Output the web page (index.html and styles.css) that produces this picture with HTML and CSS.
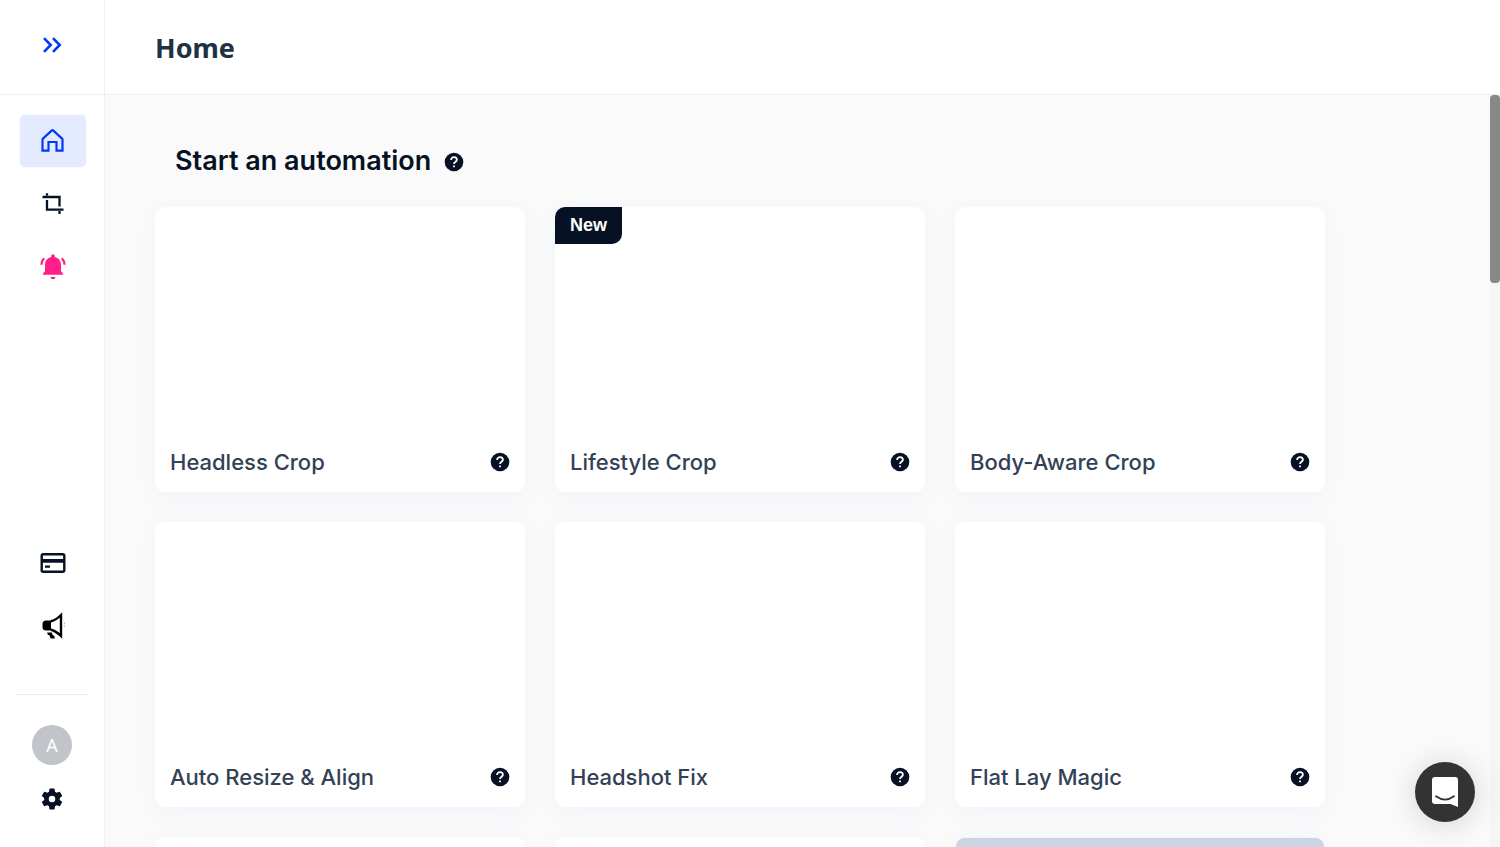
FILE: index.html
```html
<!DOCTYPE html>
<html lang="en">
<head>
<meta charset="utf-8">
<title>Home</title>
<link rel="stylesheet" href="styles.css">
</head>
<body>
<svg class="symbols" aria-hidden="true">
  <symbol id="help" viewBox="0 0 20 20">
    <circle cx="10" cy="10" r="9.300" fill="#061224"/>
    <path d="M7.100 8c0-1.900 1.300-2.900 2.900-2.900s2.900 1.100 2.900 2.600c0 2-2.900 2.100-2.900 4.300" fill="none" stroke="#fff" stroke-width="1.800"/>
    <path d="M9.100 13.400h1.800v1.800H9.100z" fill="#fff"/>
  </symbol>
</svg>
<div class="app">
  <aside class="sidebar">
    <button class="expand" aria-label="Expand menu">
      <svg width="20" height="18" viewBox="0 0 20 18" fill="none" stroke="#0038ff" stroke-width="2.600"><path d="M2 2.200 8.700 9 2 15.800M11 2.200 17.700 9 11 15.800"/></svg>
    </button>
    <nav class="nav">
      <a class="item active" href="#home" aria-label="Home">
        <svg width="24" height="24" viewBox="0 0 24 24" fill="none" stroke="#0038ff" stroke-width="2.200"><path d="M1.500 21.700V10.500Q1.500 10 1.900 9.600L10.900 1.400Q11.500.9 12.100 1.400L21.100 9.600Q21.500 10 21.500 10.500V21.700H15.500V13H7.500V21.700Z"/></svg>
      </a>
      <a class="item" href="#crop" aria-label="Crop">
        <svg width="24" height="24" viewBox="0 0 24 24" fill="none" stroke="#061224" stroke-width="2.300"><path d="M1.500 5H18.500V14.500M6 1.200V3.600M6 8V17.700H22.500M18.500 19V22"/></svg>
      </a>
      <a class="item" href="#alerts" aria-label="Notifications">
        <svg width="26" height="26" viewBox="0 0 26 26"><path d="M3 20.800v-1.400l2-2.200V11c0-4 2.500-7.200 6.200-7.900V2a1.800 1.800 0 0 1 3.600 0v1.100C18.500 3.800 21 7 21 11v6.200l2 2.200v1.400z" fill="#ff1f87"/><path d="M10.500 23h5a2.500 2.200 0 0 1-5 0z" fill="#ff1f87"/><path d="M1.500 10.800q.1-4 2.600-6.500M24.500 10.800q-.1-4-2.600-6.500" fill="none" stroke="#ff1f87" stroke-width="2.300"/></svg>
      </a>
    </nav>
    <nav class="nav lower">
      <a class="item" href="#billing" aria-label="Billing">
        <svg width="26" height="22" viewBox="0 0 26 22"><rect x="1.700" y="2.200" width="22.600" height="17.600" rx="1.500" fill="none" stroke="#061224" stroke-width="2.400"/><path d="M1 7h24v3.800H1zM5 13.500h5v2.200H5z" fill="#061224"/></svg>
      </a>
      <a class="item" href="#news" aria-label="Announcements">
        <svg width="26" height="28" viewBox="0 0 26 28"><path d="M11 8.500H6Q2.500 8.500 2.500 12v3q0 3.500 3.500 3.500h5z" fill="#000"/><path d="M11 9.300Q15.500 8.400 21 3V24Q15.500 18.600 11 17.700" fill="none" stroke="#000" stroke-width="2.400"/><path d="M7 20.500h4.800l1 3h1.400l.6 3h-4l-1.600-3.600H8z" fill="#000"/><path d="M24.500 10.500v1.500M24.500 13.200v1.400" stroke="#bbb"/></svg>
      </a>
    </nav>
    <div class="account">
      <button class="avatar" aria-label="Account">A</button>
      <a href="#settings" aria-label="Settings">
        <svg width="26" height="26" viewBox="0 0 24 24"><path fill="#061224" fill-rule="evenodd" d="M19.140 12.940c.04-.3.060-.61.060-.94s-.02-.64-.07-.94l2.030-1.580a.49.49 0 0 0 .12-.61l-1.920-3.320a.49.49 0 0 0-.59-.22l-2.390.96a7 7 0 0 0-1.620-.94L14.400 2.810a.48.48 0 0 0-.48-.41h-3.840a.47.47 0 0 0-.47.410L9.250 5.350c-.59.24-1.130.57-1.620.94l-2.390-.96a.48.48 0 0 0-.59.22L2.740 8.870a.47.47 0 0 0 .12.610l2.030 1.580c-.05.3-.09.63-.09.94s.02.640.07.940l-2.030 1.580a.49.49 0 0 0-.12.610l1.920 3.320c.12.220.370.290.590.220l2.390-.96c.5.380 1.030.7 1.620.94l.36 2.540c.05.240.240.410.480.410h3.840c.240 0 .440-.170.470-.410l.360-2.540a7 7 0 0 0 1.620-.94l2.390.96c.220.080.470 0 .590-.220l1.920-3.320a.47.47 0 0 0-.12-.610zM12 15a3 3 0 1 1 0-6 3 3 0 0 1 0 6z"/></svg>
      </a>
    </div>
  </aside>
  <div class="page">
    <header class="topbar"><h1>Home</h1></header>
    <div class="body">
      <main class="content">
        <div class="heading"><h2>Start an automation</h2><button class="help" aria-label="About automations"><svg><use href="#help"/></svg></button></div>
        <div class="cards">
          <article class="card"><h3>Headless Crop</h3><button class="help" aria-label="About Headless Crop"><svg><use href="#help"/></svg></button></article>
          <article class="card"><span class="badge">New</span><h3>Lifestyle Crop</h3><button class="help" aria-label="About Lifestyle Crop"><svg><use href="#help"/></svg></button></article>
          <article class="card"><h3>Body-Aware Crop</h3><button class="help" aria-label="About Body-Aware Crop"><svg><use href="#help"/></svg></button></article>
          <article class="card"><h3>Auto Resize &amp; Align</h3><button class="help" aria-label="About Auto Resize &amp; Align"><svg><use href="#help"/></svg></button></article>
          <article class="card"><h3>Headshot Fix</h3><button class="help" aria-label="About Headshot Fix"><svg><use href="#help"/></svg></button></article>
          <article class="card"><h3>Flat Lay Magic</h3><button class="help" aria-label="About Flat Lay Magic"><svg><use href="#help"/></svg></button></article>
          <article class="card"></article>
          <article class="card"></article>
          <article class="card tinted"></article>
        </div>
      </main>
      <div class="track"><div class="thumb"></div></div>
    </div>
  </div>
</div>
<button class="chat" aria-label="Open chat">
  <svg width="28" height="32" viewBox="0 0 28 32"><path d="M4 1h20q3 0 3 3v27l-7.500-3H4q-3 0-3-3V4q0-3 3-3z" fill="#fff"/><path d="M5 20.300q9 6.600 18 0" fill="none" stroke="#333" stroke-width="1.800" stroke-linecap="round"/></svg>
</button>
</body>
</html>
```

FILE: styles.css
```css
* { box-sizing: border-box; }
body { margin: 0; font-family: Inter, "Liberation Sans", sans-serif; color: #061224; background: #fff; }
h1, h2, h3 { margin: 0; }
button { border: 0; padding: 0; background: none; font: inherit; cursor: pointer; }
svg { display: block; }
.symbols { position: absolute; width: 0; height: 0; }

.app { display: flex; height: 100vh; overflow: hidden; }

.sidebar { flex: none; display: flex; flex-direction: column; width: 105px; border-right: 1px solid #f0f0f0; }
.expand { flex: none; display: flex; align-items: center; justify-content: center; height: 95px; padding-bottom: 4px; border-bottom: 1px solid #f0f0f0; }
.nav { display: flex; flex-direction: column; align-items: center; gap: 11px; padding: 20px 0 0 1px; }
.item { display: flex; align-items: center; justify-content: center; width: 66px; height: 52px; border-radius: 5px; }
.active { background: #e5ebff; box-shadow: 0 0 2px #e5ebff; }
.lower { margin-top: auto; padding-bottom: 42px; }
.account { display: flex; flex-direction: column; align-items: center; gap: 21px; margin: 0 16px; padding: 30px 0 35px; border-top: 1px solid #ebebeb; }
.avatar { width: 40px; height: 40px; border-radius: 50%; background: #c1c4c9; color: #fff; font-family: "Noto Sans", sans-serif; font-size: 18px; }

.page { flex: 1; min-width: 0; display: flex; flex-direction: column; }
.topbar { flex: none; display: flex; align-items: center; height: 95px; padding: 2px 50px 0; border-bottom: 1px solid #f0f0f0; }
.topbar h1 { font: 700 27px/36px "Noto Sans", sans-serif; color: #22313f; }
.body { flex: 1; min-height: 0; display: flex; background: #fafafa; }
.content { flex: 1; min-width: 0; overflow: hidden; padding: 50px 50px 0; }
.heading { display: flex; align-items: center; gap: 13px; padding: 0 20px; margin-bottom: 30px; }
.heading h2 { font-size: 27px; line-height: 32px; font-weight: 600; }
.help { flex: none; width: 20px; height: 20px; }
.help svg { width: 20px; height: 20px; }
.heading .help { margin-top: 2px; }

.cards { display: grid; grid-template-columns: repeat(3, 1fr); gap: 30px; max-width: 1170px; }
.card { position: relative; display: flex; align-items: flex-end; justify-content: space-between; height: 285px; padding: 15px; border-radius: 10px; background: #fff; box-shadow: 0 5px 25px rgba(205, 220, 250, .2); }
.card h3 { font-size: 22px; line-height: 30px; font-weight: 500; color: #334155; }
.card .help { margin-bottom: 5px; }
.badge { position: absolute; top: 0; left: 0; padding: 0 15px 1px; border-radius: 10px 0; background: #061224; color: #fff; font: 700 18px/36px "Liberation Sans", sans-serif; }
.tinted { border: 1px solid #f1f4f8; background: #cbd5e1; }

.track { flex: none; width: 10px; background: #f5f5f5; }
.thumb { height: 25%; border-radius: 4px; background: #888; }

.chat { position: fixed; right: 25px; bottom: 25px; display: flex; align-items: center; justify-content: center; width: 60px; height: 60px; border-radius: 50%; background: #333; box-shadow: 0 2px 30px rgba(0, 0, 0, .16); }
```
